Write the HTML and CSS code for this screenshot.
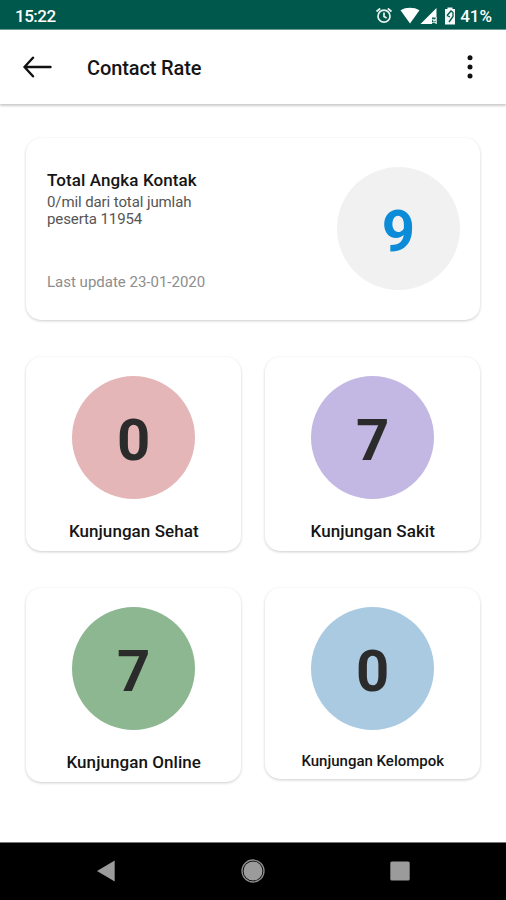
FILE: index.html
```html
<!DOCTYPE html>
<html lang="id">
<head>
<meta charset="utf-8">
<title>Contact Rate</title>
<link rel="stylesheet" href="styles.css">
</head>
<body>
<div class="status">
  <span class="clock">15:22</span>
  <svg class="status-icons" width="62" height="20" viewBox="0 0 62 20">
    <g fill="none" stroke="#e9f2ef" stroke-width="1.700">
      <circle cx="9" cy="10.200" r="6"/>
      <path d="M9 6.500v4l2.600 1.500M1.500 5.500l3.700-3M16.500 5.500l-3.700-3"/>
    </g>
    <path fill="#fff" d="M25.500 4.200C31 .9 39 .9 44.500 4.200L35 17.500z"/>
    <path fill="#fff" d="M61.500 2v9.500H57V18H45.500z"/>
    <path stroke="#dce9e6" stroke-width="1.300" d="M57.500 13l3 4M60.500 13l-3 4M61.200 11v7"/>
  </svg>
  <svg class="battery" width="12" height="18" viewBox="0 0 12 18">
    <path fill="#f4f8f7" d="M3.500 .5h5V2H11v15.500H1V2h2.500z"/>
    <path fill="none" stroke="#00574b" stroke-width="1.300" d="M3 8.500L7 4l2 1.500v4L5 15M3 8.500L6 10"/>
  </svg>
  <span class="percent">41%</span>
</div>
<header class="bar">
  <svg class="back" width="30" height="24" viewBox="0 0 30 24" fill="none" stroke="#111" stroke-width="2.400" stroke-linecap="round" stroke-linejoin="round"><path d="M27.500 12H1.500M10 2.700L1.500 12l8.500 9.300"/></svg>
  <h1>Contact Rate</h1>
  <svg class="more" width="6" height="26" viewBox="0 0 6 26" fill="#111"><circle cx="3" cy="3.700" r="2.500"/><circle cx="3" cy="12.900" r="2.500"/><circle cx="3" cy="22.100" r="2.500"/></svg>
</header>
<main>
  <section class="card summary">
    <div class="info">
      <h2>Total Angka Kontak</h2>
      <p class="rate">0/mil dari total jumlah<br>peserta 11954</p>
      <p class="update">Last update 23-01-2020</p>
    </div>
    <div class="circle total">9</div>
  </section>
  <div class="grid">
    <section class="card visit"><div class="circle pink">0</div><h3>Kunjungan Sehat</h3></section>
    <section class="card visit"><div class="circle purple">7</div><h3>Kunjungan Sakit</h3></section>
    <section class="card visit"><div class="circle green">7</div><h3>Kunjungan Online</h3></section>
    <section class="card visit short"><div class="circle blue">0</div><h3 class="kelompok">Kunjungan Kelompok</h3></section>
  </div>
</main>
<nav class="nav">
  <svg width="18" height="22" viewBox="0 0 18 22"><path fill="#9b9b9b" d="M17.700.5v21L0 11z"/></svg>
  <svg width="24" height="24" viewBox="0 0 24 24"><circle cx="12" cy="12" r="11" fill="none" stroke="#8d8d8d" stroke-width="1.300"/><circle cx="12" cy="12" r="9.500" fill="#9b9b9b"/></svg>
  <svg width="20" height="20" viewBox="0 0 20 20"><rect x=".3" y=".5" width="19.400" height="19" rx="1.500" fill="#9b9b9b"/></svg>
</nav>
</body>
</html>
```
FILE: styles.css
```css
* { box-sizing: border-box; margin: 0; padding: 0; }
body {
  width: 506px;
  height: 900px;
  display: flex;
  flex-direction: column;
  overflow: hidden;
  background: #fff;
  font-family: Roboto, "Liberation Sans", sans-serif;
  color: #151515;
}
svg { display: block; flex: none; }
.status {
  height: 30px;
  padding: 2px 14px 0 15px;
  display: flex;
  align-items: center;
  background: #00574b;
  border-bottom: 1px solid #6b9a93;
  color: #fff;
  font-size: 17px;
  font-weight: 500;
}
.clock { flex: 1; letter-spacing: -.5px; }
.status-icons { margin-right: 7px; }
.battery { margin-right: 4px; }
.bar {
  height: 74px;
  padding: 0 33px 0 23px;
  display: flex;
  align-items: center;
  box-shadow: 0 2px 2px rgba(0, 0, 0, .2);
}
h1 {
  flex: 1;
  margin: 1px 0 0 34px;
  font-size: 20px;
  font-weight: 500;
  letter-spacing: -.12px;
}
main { flex: 1; padding: 34px 25px 0 26px; }
.card {
  border-radius: 15px;
  background: #fff;
  box-shadow: 0 1px 3px rgba(0, 0, 0, .2);
}
.summary {
  width: 454px;
  height: 182px;
  display: flex;
  justify-content: space-between;
  padding: 29px 20px 0 21px;
}
h2 {
  margin-top: 3px;
  font-size: 17px;
  line-height: 20px;
  font-weight: 500;
  letter-spacing: .1px;
  white-space: nowrap;
}
.rate { margin-top: 4px; font-size: 15px; line-height: 17px; letter-spacing: -.1px; color: #555; }
.update { margin-top: 46px; font-size: 15px; line-height: 17px; color: #8d8d8d; }
.circle {
  width: 123px;
  height: 123px;
  flex: none;
  border-radius: 50%;
  text-align: center;
  font-size: 58px;
  line-height: 128px;
  font-weight: 700;
  color: #2b2b2b;
}
.total { background: #f1f1f1; color: #0c8bd8; }
.pink { background: #e5b6b7; }
.purple { background: #c3b8e3; }
.green { background: #8db791; }
.blue { background: #aacae1; }
.grid {
  margin-top: 37px;
  display: grid;
  grid-template-columns: 215px 215px;
  gap: 37px 24px;
  align-items: start;
}
.visit {
  height: 194px;
  padding: 18.500px 0 0 .5px;
  display: flex;
  flex-direction: column;
  align-items: center;
}
.short { height: 191px; }
h3 {
  margin-top: 22px;
  font-size: 17px;
  line-height: 20px;
  font-weight: 500;
  letter-spacing: .06px;
  white-space: nowrap;
}
.kelompok { margin-top: 21px; font-size: 15px; letter-spacing: 0; }
.nav {
  height: 58px;
  padding: 0 96px 1px 97px;
  display: flex;
  align-items: center;
  justify-content: space-between;
  background: #000;
  border-top: 1px solid #777;
}
```
